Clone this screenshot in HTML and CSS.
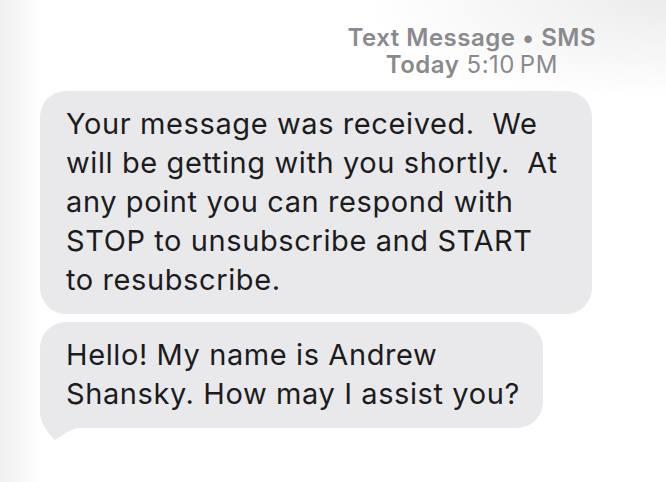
FILE: index.html
```html
<!DOCTYPE html>
<html lang="en">
<head>
<meta charset="utf-8"/>
<meta content="width=device-width, initial-scale=1.0" name="viewport"/>
<title>Text Message</title>
<link rel="stylesheet" href="styles.css">
</head>
<body>
<div class="thread">
  <div class="thread-head">
    <div class="head-inner">
      <div class="channel">Text Message • SMS</div>
      <div class="stamp"><strong>Today</strong> 5:10&#8201;PM</div>
    </div>
  </div>
  <div class="messages">
    <div class="bubble wide">Your message was received.&nbsp; We<br>will be getting with you shortly.&nbsp; At<br>any point you can respond with<br>STOP to unsubscribe and START<br>to resubscribe.</div>
    <div class="bubble">Hello! My name is Andrew<br>Shansky. How may I assist you?<svg class="tail" width="40" height="42" viewBox="0 0 40 42"><path d="M0 0 V14 C1 24 8 33 15 40 C22 36 29 30 37 28 H40 V0 Z" fill="#e9e9eb"/></svg></div>
  </div>
</div>
</body>
</html>
```

FILE: styles.css
```css
body {
  margin: 0;
  font-family: 'Inter', 'Liberation Sans', sans-serif;
  color: #1c1c1e;
  min-height: 482px;
  background:
    radial-gradient(ellipse 300px 100px at 100% 0, #ececec, rgba(255,255,255,0) 100%),
    linear-gradient(to right, #f0f0f0, #ffffff 42px);
}
.thread {
  padding: 24px 0 0 40px;
}
.thread-head {
  display: flex;
  justify-content: flex-end;
  padding-right: 70px;
  color: #8a8a8e;
  font-size: 24px;
  line-height: 27px;
  letter-spacing: 0.5px;
}
.head-inner {
  text-align: center;
}
.channel {
  font-weight: 600;
}
.stamp strong {
  font-weight: 600;
}
.messages {
  display: flex;
  flex-direction: column;
  align-items: flex-start;
  gap: 8px;
  margin-top: 13px;
}
.bubble {
  position: relative;
  box-sizing: border-box;
  max-width: 552px;
  padding: 13px 23px 15px 26px;
  background-color: #e9e9eb;
  border-radius: 26px;
  font-size: 29px;
  line-height: 39px;
  letter-spacing: 0.6px;
}
.bubble.wide {
  width: 552px;
}
.tail {
  position: absolute;
  left: 0;
  bottom: -14px;
  z-index: -1;
}
```
